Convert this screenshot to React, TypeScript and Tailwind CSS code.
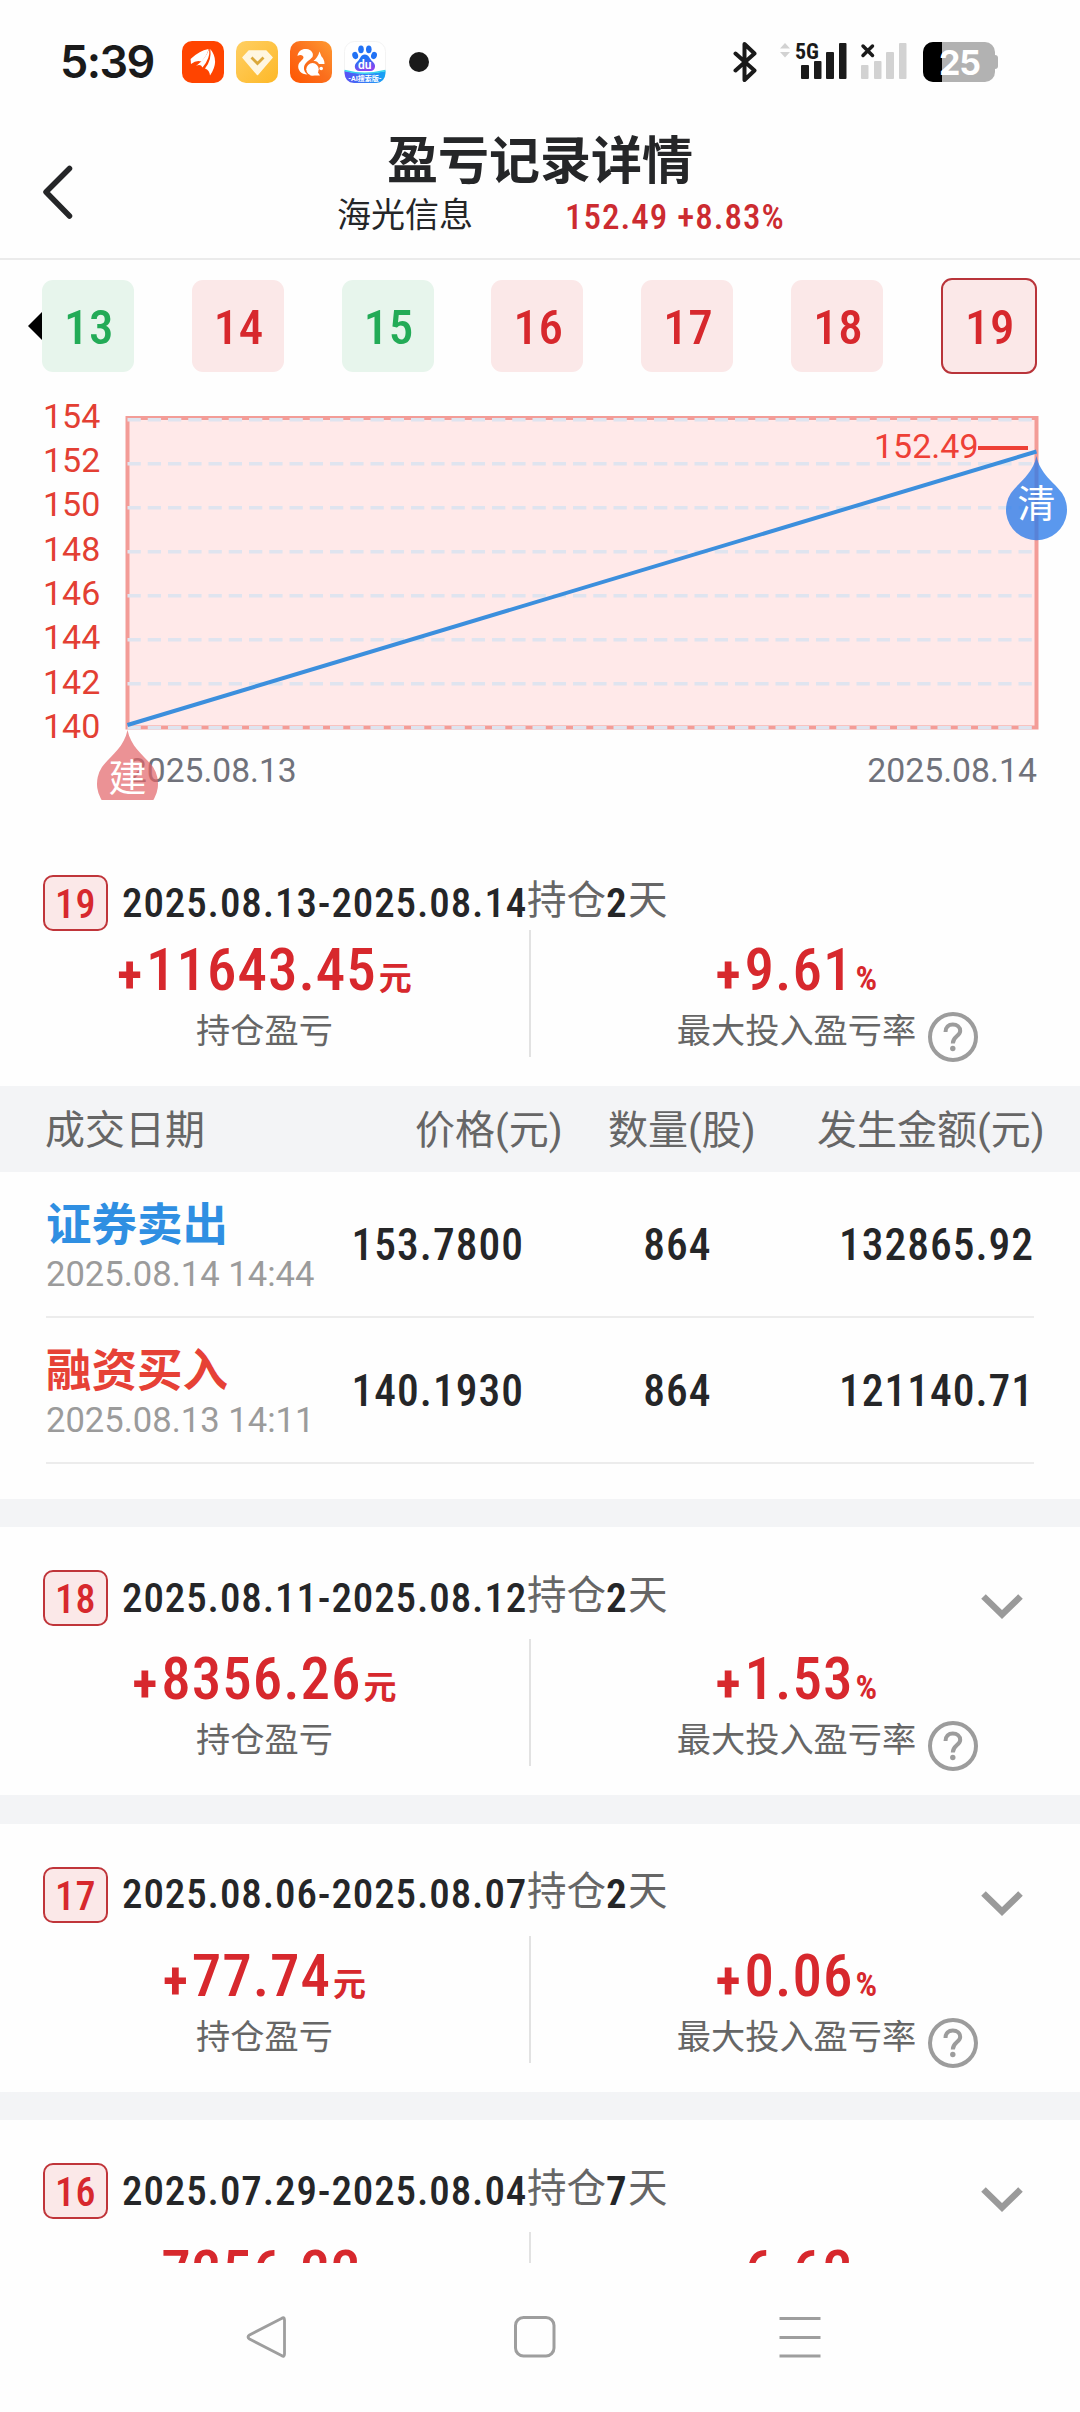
import type { ReactNode } from 'react';
import clsx from 'clsx';

const days = [
  { n: 13, up: false },
  { n: 14, up: true },
  { n: 15, up: false },
  { n: 16, up: true },
  { n: 17, up: true },
  { n: 18, up: true },
  { n: 19, up: true, active: true },
];

const trades = [
  { name: '证券卖出', sell: true, time: '2025.08.14 14:44', price: '153.7800', qty: '864', total: '132865.92' },
  { name: '融资买入', sell: false, time: '2025.08.13 14:11', price: '140.1930', qty: '864', total: '121140.71' },
];

const history = [
  { n: 18, range: '2025.08.11-2025.08.12', days: 2, profit: '8356.26', rate: '1.53' },
  { n: 17, range: '2025.08.06-2025.08.07', days: 2, profit: '77.74', rate: '0.06' },
  { n: 16, range: '2025.07.29-2025.08.04', days: 7, profit: '7256.22', rate: '6.62' },
];

function AppIcons() {
  return (
    <div className="flex gap-[12px]">
      <svg className="w-[42px] h-[42px]" viewBox="0 0 42 42">
        <rect width="42" height="42" rx="10" fill="#ff4400" />
        <g fill="#fff">
          <path d="M8.6 18Q17 9.8 26.5 8Q25.5 14 19.5 20.5Q14.5 18.5 9 23Z" />
          <path d="M27.2 8Q28.5 17 20.5 26.5Q18.5 22.5 14 25Q23.5 18 27.2 8Z" />
          <path d="M28.3 8Q38 20 28 34.5Q27.5 29 23 27.5Q30 19 28.3 8Z" />
        </g>
      </svg>
      <svg className="w-[42px] h-[42px]" viewBox="0 0 42 42">
        <defs>
          <linearGradient id="gold" x1="0" y1="0" x2="1" y2="1">
            <stop offset="0" stopColor="#ffcf63" />
            <stop offset="1" stopColor="#fdb827" />
          </linearGradient>
        </defs>
        <rect width="42" height="42" rx="10" fill="url(#gold)" />
        <path d="M13 10h17l6 6.5L21.5 33.5L7 16.5Z" fill="#fff6e0" stroke="#fff6e0" strokeWidth="1.5" strokeLinejoin="round" />
        <path d="M15.5 16.5l6 6 6-6" fill="none" stroke="#dba83a" strokeWidth="2.8" />
      </svg>
      <svg className="w-[42px] h-[42px]" viewBox="0 0 42 42">
        <defs>
          <linearGradient id="orange" x1="1" y1="0" x2="0" y2="1">
            <stop offset="0" stopColor="#ff9a30" />
            <stop offset="0.5" stopColor="#fb6f1d" />
            <stop offset="1" stopColor="#ff5500" />
          </linearGradient>
        </defs>
        <rect width="42" height="42" rx="10" fill="url(#orange)" />
        <path d="M7.5 15C8 9.5 12.5 7.5 16.5 8C21.5 8.5 24 12.5 22.5 16C20 19 15 21 14 26C13.5 29 15 32 17.5 33.5C11 33.5 7 28.5 8.5 23.5C9.5 20.5 13 19 13.5 16.5C13.5 14 10 13 7.5 15Z" fill="#fff" />
        <path d="M29.5 10.5L31.5 15.5C33.5 17.5 34.5 20 34.5 23H29C27.5 20.5 26 19.5 23.5 20C26 18 28.5 14.5 29.5 10.5Z" fill="#fff" />
        <path d="M20 34.5H30L27 30Z" fill="#fff" />
        <circle cx="22.5" cy="28.3" r="6.2" fill="#fff" />
        <circle cx="31.2" cy="27.5" r="1.8" fill="#fff" />
      </svg>
      <svg className="w-[42px] h-[42px]" viewBox="0 0 42 42">
        <defs>
          <linearGradient id="paw" x1="0" y1="0" x2="0.3" y2="1">
            <stop offset="0.4" stopColor="#2272f5" />
            <stop offset="1" stopColor="#8a45f0" />
          </linearGradient>
          <linearGradient id="wave" x1="0" y1="0" x2="1" y2="0">
            <stop offset="0" stopColor="#5a50f5" />
            <stop offset="1" stopColor="#14a5f5" />
          </linearGradient>
        </defs>
        <rect x="0.5" y="0.5" width="41" height="41" rx="10" fill="#fff" stroke="#f3f3f3" />
        <path d="M0.5 30Q20 35 41.5 30V32Q41 41.5 32 42H10Q1 41.5 0.5 32Z" fill="url(#wave)" />
        <path d="M0.5 29.5Q20 35 41.5 29.5" fill="none" stroke="#35d5ee" strokeWidth="1.5" />
        <g fill="#2272f5">
          <ellipse cx="11.2" cy="14.5" rx="2.9" ry="3.7" transform="rotate(-15 11.2 14.5)" />
          <ellipse cx="17" cy="8.3" rx="2.8" ry="3.9" />
          <ellipse cx="24.8" cy="8.3" rx="2.8" ry="3.9" />
          <ellipse cx="30" cy="14.5" rx="2.9" ry="3.7" transform="rotate(15 30 14.5)" />
        </g>
        <path d="M20.8 13.5C25 13.5 25.5 18 28.5 20.5C33 24 31 30 26.5 30H15.5C10.5 30 9 24 13.5 20.5C16.5 18 16.5 13.5 20.8 13.5Z" fill="url(#paw)" />
        <text x="20.8" y="28" textAnchor="middle" className="text-[12px] font-semibold fill-white">du</text>
        <text x="21" y="39.8" textAnchor="middle" className="text-[7px] font-bold fill-white">-AI搜索版-</text>
      </svg>
    </div>
  );
}

function StatusBar() {
  return (
    <div className="h-[124px] pl-[60px] pr-[82px] flex items-center text-[#1a1a1a]">
      <span className="w-[122px] font-['Inter'] font-semibold text-[45px] leading-[46px] tracking-[-1.6px]">5:39</span>
      <AppIcons />
      <div className="ml-[23px] w-[20px] h-[20px] rounded-full bg-[#1a1a1a]" />
      <div className="ml-auto flex items-center">
        <svg className="w-[24px] h-[42px]" viewBox="0 0 24 42" fill="none" stroke="#1a1a1a" strokeWidth="4" strokeLinejoin="round" strokeLinecap="round">
          <path d="M2.5 12.5L21.5 29.5L11.5 39V3L21.5 12.5L2.5 29.5" />
        </svg>
        <svg className="ml-[22px] w-[128px] h-[42px] overflow-visible" viewBox="779 42 128 42">
          <path d="M785 44l5 5.5h-10zM785 58.5l5-5.5h-10z" fill="#d2d2d2" />
          <text x="795" y="59.5" className="text-[22px] font-bold font-['Roboto_Condensed'] fill-[#1a1a1a]">5G</text>
          <g fill="#1a1a1a">
            <rect x="801" y="66" width="8" height="14" rx="1" />
            <rect x="814" y="62" width="7.5" height="18" rx="1" />
            <rect x="826" y="53" width="8" height="27" rx="1" />
            <rect x="839" y="44" width="7.5" height="36" rx="1" />
          </g>
          <g fill="#d2d2d2">
            <rect x="861" y="66" width="7.5" height="14" rx="1" />
            <rect x="874" y="62" width="7.5" height="18" rx="1" />
            <rect x="886" y="53" width="8" height="27" rx="1" />
            <rect x="899" y="44" width="7.5" height="36" rx="1" />
          </g>
          <path d="M863 47l9.5 9.5M872.5 47l-9.5 9.5" stroke="#1a1a1a" strokeWidth="3.5" strokeLinecap="round" />
        </svg>
        <svg className="ml-[16px] w-[75px] h-[40px]" viewBox="0 0 75 40">
          <clipPath id="cell">
            <rect width="72" height="40" rx="10" />
          </clipPath>
          <rect x="66" y="13" width="9" height="14" rx="3" fill="#b2b2b2" />
          <g clipPath="url(#cell)">
            <rect width="72" height="40" fill="#b2b2b2" />
            <rect width="19" height="40" fill="#000" />
          </g>
          <text x="36.5" y="32.5" textAnchor="middle" className="text-[34px] font-bold font-['Inter'] tracking-[-1px] fill-white">25</text>
        </svg>
      </div>
    </div>
  );
}

function Header() {
  return (
    <div className="h-[136px] flex border-b-2 border-[#ebebeb]">
      <div className="w-[110px] pt-[2px] pl-[42px] flex items-center">
        <svg className="w-[31px] h-[54px]" viewBox="0 0 31 54" fill="none" stroke="#252628" strokeWidth="5.5" strokeLinecap="round" strokeLinejoin="round">
          <path d="M27.5 3.5L4 27L27.5 51" />
        </svg>
      </div>
      <div className="w-[860px] pt-[3px]">
        <h1 className="text-center font-['Noto_Sans_CJK_SC',sans-serif] text-[51px] leading-[60px] font-bold text-[#252628]">盈亏记录详情</h1>
        <div className="pt-[3px] pl-[227px] flex items-center gap-[92px] leading-[46px]">
          <span className="text-[34px] text-[#252628]">海光信息</span>
          <span className="pt-[7px] text-[35px] leading-[42px] tracking-[1px] font-['Roboto_Condensed'] font-medium text-[#cc2b30]">152.49 +8.83%</span>
        </div>
      </div>
    </div>
  );
}

function DayTabs() {
  return (
    <div className="pt-[18px] pl-[28px] pr-[43px] flex items-center">
      <svg className="w-[14px] h-[28px]" viewBox="0 0 14 28">
        <path d="M0 14L14 0V28Z" fill="#000" />
      </svg>
      <div className="flex-1 flex items-center justify-between">
        {days.map((d) => (
          <div
            key={d.n}
            className={clsx(
              "pt-[4px] pl-[2px] flex items-center justify-center rounded-[11px] font-['Roboto_Condensed'] font-medium text-[49px] tracking-[0.5px]",
              d.active ? 'w-[96px] h-[96px] border-2 border-[#b9343a]' : 'w-[92px] h-[92px]',
              d.up ? 'bg-[#fbe8e8] text-[#d7282d]' : 'bg-[#e7f5ec] text-[#23ab57]'
            )}
          >
            {d.n}
          </div>
        ))}
      </div>
    </div>
  );
}

function Chart() {
  const grid = [0, 1, 2, 3, 4, 5, 6, 7];
  return (
    <svg className="block w-[1080px] h-[426px]" viewBox="0 374 1080 426">
      <rect x="127.5" y="418" width="909" height="309.5" fill="#ffe9e9" stroke="#f39c97" strokeWidth="4" />
      {grid.map((i) => (
        <line key={i} x1="127.5" x2="1034" y1={419.8 + i * 44} y2={419.8 + i * 44} stroke="#dfe4ef" strokeWidth="3.5" strokeDasharray="13.3 6.95" />
      ))}
      {grid.map((i) => (
        <text key={i} x="43" y={427.8 + i * 44.3} className="text-[34px] fill-[#e33f33]">
          {154 - i * 2}
        </text>
      ))}
      <line x1="127.5" y1="725" x2="1036.5" y2="451.5" stroke="#3c8fdd" strokeWidth="4" />
      <text x="874" y="458" className="text-[34px] fill-[#ee4036]">152.49</text>
      <line x1="978" x2="1028" y1="448" y2="448" stroke="#ee4036" strokeWidth="4" />
      <text x="128" y="782" className="text-[33.6px] fill-[#70727b]">2025.08.13</text>
      <text x="1037" y="782" textAnchor="end" className="text-[33.8px] fill-[#70727b]">2025.08.14</text>

      {/* 建仓 / 清仓 */}
      <path d="M127.5 730C131 748 145 756 153 767A30.5 30.5 0 1 1 102 767C110 756 124 748 127.5 730Z" fill="#e26468" fillOpacity="0.7" />
      <text x="127.5" y="790.5" textAnchor="middle" className="text-[38px] fill-white">建</text>
      <path d="M1036.5 456C1040 474 1054 482 1062 493A30.5 30.5 0 1 1 1011 493C1019 482 1033 474 1036.5 456Z" fill="#2b7be9" fillOpacity="0.78" />
      <text x="1036.5" y="516.5" textAnchor="middle" className="text-[38px] fill-white">清</text>
    </svg>
  );
}

function RecordHead({ n, range, dayCount, foldable }: { n: number; range: string; dayCount: number; foldable?: boolean }) {
  return (
    <div className="h-[56px] pl-[43px] pr-[57px] flex items-center">
      <div className="w-[65px] h-[56px] pt-[4px] rounded-[10px] border-2 border-[#c0353a] bg-[#fbe8e8] flex items-center justify-center font-['Roboto_Condensed'] font-medium text-[40px] tracking-[0.5px] text-[#d7282d]">
        {n}
      </div>
      <span className="ml-[14px] pt-px w-[405px] whitespace-nowrap font-['Roboto_Condensed'] font-medium text-[41px] tracking-[0.9px] text-[#252628]">{range}</span>
      <span className="pb-[5px] text-[39.5px] text-[#666]">持仓</span>
      <span className="pt-px w-[22px] font-['Roboto_Condensed'] font-semibold text-[41px] text-[#252628]">{dayCount}</span>
      <span className="pb-[5px] text-[39.5px] text-[#666]">天</span>
      {foldable && (
        <svg className="ml-auto mt-[18px] w-[42px] h-[26px]" viewBox="0 0 42 26" fill="none" stroke="#9a9a9a" strokeWidth="6.5">
          <path d="M2.5 2.5L21 20.5L39.5 2.5" />
        </svg>
      )}
    </div>
  );
}

function Amount({ value, children }: { value: string; children: ReactNode }) {
  return (
    <p className="font-['Roboto_Condensed'] font-medium text-[59px] leading-[70px] tracking-[1px] text-[#d7282d]">
      <span className="relative top-[2px] mr-[3px] text-[52px] leading-[52px] font-bold">+</span>
      {value}
      {children}
    </p>
  );
}

function Stats({ profit, rate }: { profit: string; rate: string }) {
  return (
    <div className="h-[127px] flex">
      <div className="w-[529px] pt-[5px] flex flex-col items-center">
        <Amount value={profit}>
          <span className="ml-[2px] font-['Noto_Sans_CJK_SC',sans-serif] text-[33px] leading-[33px] font-bold tracking-normal">元</span>
        </Amount>
        <p className="mt-[6px] text-[34.2px] leading-[40px] text-[#666]">持仓盈亏</p>
      </div>
      <div className="w-[2px] bg-[#e2e2e2]" />
      <div className="w-[531px] pt-[5px] flex flex-col items-center">
        <Amount value={rate}>
          <span className="ml-[2px] text-[34px] leading-[34px] font-bold tracking-normal">%</span>
        </Amount>
        <div className="relative mt-[6px] text-[34.2px] leading-[40px] text-[#666]">
          最大投入盈亏率
          <div className="absolute left-full top-px ml-[12px] w-[50px] h-[50px] rounded-full border-4 border-[#9c9c9c] flex items-center justify-center">
            <svg className="w-[20px] h-[30px]" viewBox="0 0 20 30" fill="none" stroke="#9c9c9c" strokeWidth="4">
              <path d="M2.5 10C2.5 5 5.5 2.5 9.8 2.5C14 2.5 17.2 5 17.2 9C17.2 14 9.8 14.5 9.8 21.5" />
              <circle cx="9.8" cy="26.5" r="2.7" fill="#9c9c9c" stroke="none" />
            </svg>
          </div>
        </div>
      </div>
    </div>
  );
}

function TradeTable() {
  return (
    <div className="pb-[35px]">
      <div className="h-[86px] pt-[3px] pl-[45px] bg-[#f3f4f6] flex items-center text-[40px] text-[#666] whitespace-nowrap">
        <span className="w-[370px]">成交日期</span>
        <span className="w-[193px]">价格(元)</span>
        <span className="w-[209px]">数量(股)</span>
        <span>发生金额(元)</span>
      </div>
      {trades.map((t) => (
        <div key={t.time} className="mx-[46px] h-[146px] pt-[4px] border-b-2 border-[#ececec] flex items-center font-['Roboto_Condensed'] font-medium text-[43.5px] tracking-[1px] text-[#252628] whitespace-nowrap">
          <div className="w-[306px] font-['Roboto','Noto_Sans_CJK_SC',sans-serif] tracking-normal">
            <p className={clsx("-mt-[4px] font-['Noto_Sans_CJK_SC',sans-serif] text-[45.5px] leading-[56px] font-bold", t.sell ? 'text-[#2f8fe2]' : 'text-[#e64136]')}>{t.name}</p>
            <p className="mt-[4px] text-[34.6px] leading-[42px] font-normal text-[#9b9b9b]">{t.time}</p>
          </div>
          <span className="w-[292px]">{t.price}</span>
          <span className="w-[196px]">{t.qty}</span>
          <span>{t.total}</span>
        </div>
      ))}
    </div>
  );
}

function NavBar() {
  return (
    <div className="h-[149px] pt-[52px] flex">
      <svg className="ml-[245px] w-[44px] h-[44px]" viewBox="0 0 44 44" fill="none" stroke="#9e9e9e" strokeWidth="2.8" strokeLinejoin="round">
        <path d="M36.5 3.5Q39.5 1.5 39.5 5V39Q39.5 42.5 36.5 40.5L4.5 24Q1.5 22 4.5 20Z" />
      </svg>
      <svg className="ml-[224px] w-[44px] h-[44px]" viewBox="0 0 44 44" fill="none" stroke="#9e9e9e" strokeWidth="3">
        <rect x="2.5" y="2.5" width="38.5" height="38.5" rx="8" />
      </svg>
      <svg className="ml-[222px] w-[42px] h-[44px]" viewBox="0 0 42 44" stroke="#9e9e9e" strokeWidth="3.2">
        <path d="M0.5 3.5H41.5M0.5 22.5H41.5M0.5 41H41.5" />
      </svg>
    </div>
  );
}

export default function App() {
  return (
    <div className="w-[1080px] h-[2412px] overflow-hidden bg-[#fefefe] font-['Roboto','Noto_Sans_CJK_SC',sans-serif]">
      <div className="h-[2263px] overflow-hidden">
        <StatusBar />
        <Header />
        <DayTabs />
        <Chart />

        <div className="pt-[75px] pb-[29px]">
          <RecordHead n={19} range="2025.08.13-2025.08.14" dayCount={2} />
          <div className="-mt-px">
            <Stats profit="11643.45" rate="9.61" />
          </div>
        </div>
        <TradeTable />

        {history.map((h) => (
          <div key={h.n}>
            <div className="h-[28.3px] bg-[#f3f4f6]" />
            <div className="h-[268px] pt-[43px]">
              <RecordHead n={h.n} range={h.range} dayCount={h.days} foldable />
              <div className="pt-[13px]">
                <Stats profit={h.profit} rate={h.rate} />
              </div>
            </div>
          </div>
        ))}
      </div>
      <NavBar />
    </div>
  );
}
